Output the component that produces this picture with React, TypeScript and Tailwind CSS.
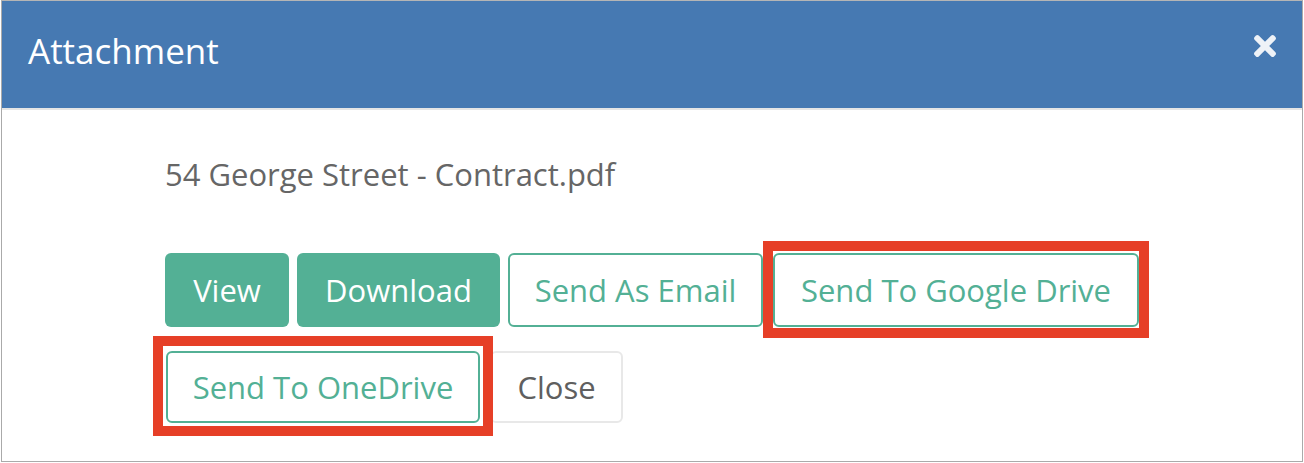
import React from "react";

const font = { fontFamily: '"Open Sans", "Noto Sans", sans-serif' };

function CloseIcon() {
  return (
    <svg viewBox="0 0 352 512" width="22" height="32" fill="currentColor" aria-hidden="true">
      <path d="M242.72 256l100.07-100.07c12.28-12.28 12.28-32.19 0-44.48l-22.24-22.24c-12.28-12.28-32.19-12.28-44.48 0L176 189.28 75.930 89.21c-12.28-12.28-32.19-12.28-44.48 0L9.21 111.45c-12.28 12.28-12.28 32.190 0 44.48L109.28 256 9.21 356.07c-12.28 12.28-12.28 32.19 0 44.48l22.24 22.24c12.28 12.28 32.2 12.28 44.48 0L176 322.72l100.07 100.07c12.28 12.28 32.2 12.28 44.48 0l22.24-22.24c12.28-12.28 12.28-32.19 0-44.48L242.72 256z" />
    </svg>
  );
}

export default function App() {
  return (
    <div className="bg-white w-[1304px] h-[463px]" style={font}>
      <div className="ml-[1px] w-[1302px] h-[462px] border border-[#aaaaaa] border-t-[#b5b5b5] flex flex-col">
        {/* modal header */}
        <div className="h-[109px] shrink-0 bg-[#4679b2] border-b-2 border-[#e5e5e5] flex items-center justify-between pl-[26px] pr-[26px]">
          <h2 className="text-white text-[35px] leading-none font-normal -mt-[9px]">Attachment</h2>
          <button className="text-[#eef2f7] -mt-[18px]">
            <CloseIcon />
          </button>
        </div>

        {/* modal body */}
        <div className="pl-[163px] pt-[44px]">
          <p className="text-[#666666] text-[31px] leading-[40px]">54 George Street - Contract.pdf</p>

          <div className="mt-[59px] flex items-center gap-2">
            <button className="h-[74px] w-[124px] rounded-[6px] bg-[#53b095] text-white text-[31px]">View</button>
            <button className="h-[74px] w-[203px] rounded-[6px] bg-[#53b095] text-white text-[31px]">Download</button>
            <button className="h-[74px] w-[255px] rounded-[6px] border-2 border-[#53b095] bg-white text-[#53b095] text-[31px]">
              Send As Email
            </button>
            <div className="relative ml-[2px]">
              <button className="h-[74px] w-[366px] rounded-[6px] border-2 border-[#53b095] bg-white text-[#53b095] text-[31px]">
                Send To Google Drive
              </button>
              <span className="absolute -top-[12px] -bottom-[11px] -left-[10px] -right-[10px] border-[10px] border-[#e63f27] pointer-events-none" />
            </div>
          </div>

          <div className="mt-[24px] ml-[1px] flex items-center gap-[10px]">
            <div className="relative">
              <button className="h-[72px] w-[314px] rounded-[6px] border-2 border-[#53b095] bg-white text-[#53b095] text-[31px]">
                Send To OneDrive
              </button>
              <span className="absolute -top-[15px] -bottom-[13px] -left-[13px] -right-[13px] border-[10px] border-[#e63f27] pointer-events-none" />
            </div>
            <button className="h-[72px] w-[133px] rounded-[6px] border-2 border-[#e8e8e8] bg-white text-[#5f5f5f] text-[31px]">
              Close
            </button>
          </div>
        </div>
      </div>
    </div>
  );
}
